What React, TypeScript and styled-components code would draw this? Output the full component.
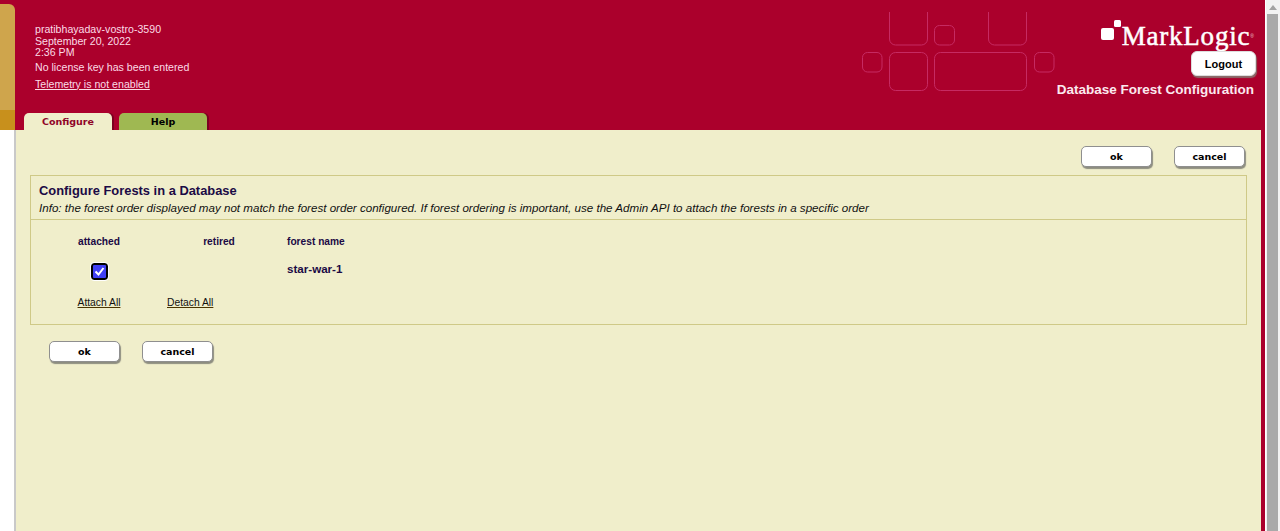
import React from 'react';
import styled, { createGlobalStyle } from 'styled-components';

const crimson = '#ab002c';
const cream = '#f0eecb';
const ink = '#1b0a45';

const GlobalStyle = createGlobalStyle`
  html, body {
    margin: 0;
    padding: 0;
    height: 100%;
    overflow: hidden;
    background: #fff;
    font-family: "Liberation Sans", Arial, sans-serif;
  }
`;

const Shell = styled.div`
  display: flex;
  height: 531px;
  overflow: hidden;
`;

const Rail = styled.div`
  width: 16px;
  flex: none;
  display: flex;
  flex-direction: column;
  background: #fff;
`;

const RailCap = styled.div`
  height: 130px;
  flex: none;
  background: ${crimson};
  padding-top: 4px;
  box-sizing: border-box;
`;

const RailTan = styled.div`
  height: 106px;
  width: 15px;
  background: #cfa54c;
  border-top-right-radius: 6px;
`;

const RailGold = styled.div`
  height: 20px;
  width: 15px;
  background: #c8901c;
`;

const RailEdge = styled.div`
  flex: 1;
  border-right: 2px solid #c9c9c9;
`;

const Main = styled.div`
  flex: 1;
  min-width: 0;
  display: flex;
  flex-direction: column;
  background: ${crimson};
  padding-right: 4px;
`;

const Header = styled.header`
  height: 113px;
  flex: none;
  display: flex;
`;

const HostInfo = styled.div`
  flex: 1;
  padding: 24px 0 0 19px;
  color: #fbdbe6;
  font-size: 10.6px;
  line-height: 11.5px;
`;

const LicenseNote = styled.div`
  margin-top: 2px;
  line-height: 13px;
`;

const TelemetryLink = styled.a`
  display: block;
  margin-top: 4px;
  line-height: 13px;
  color: #fbdbe6;
  text-decoration: underline;
`;

const Deco = styled.svg`
  flex: none;
  width: 193px;
  height: 92px;
`;

const Brand = styled.div`
  flex: none;
  width: 201px;
  margin-right: 5px;
  display: flex;
  flex-direction: column;
  align-items: flex-end;
`;

const Logo = styled.div`
  display: flex;
  align-items: flex-start;
  margin: 19px 2px 0 0;
  height: 32px;
`;

const LogoMark = styled.svg`
  width: 21px;
  height: 21px;
  flex: none;
  margin-top: 1px;
`;

const LogoWord = styled.span`
  font-family: "Liberation Serif", "Times New Roman", serif;
  font-size: 27px;
  line-height: 34px;
  letter-spacing: 0.8px;
  color: #fff;
  -webkit-text-stroke: 0.5px #fff;
`;

const LogoReg = styled.span`
  font-size: 5px;
  line-height: 34px;
  color: #f2c5d2;
`;

const LogoutButton = styled.button`
  width: 65px;
  height: 25px;
  padding: 0;
  border: 1px solid #ddd;
  border-radius: 6px;
  background: #fff;
  box-shadow: 1px 2px 1px #8a6a6a;
  color: #000;
  font: bold 11px "Liberation Sans", Arial, sans-serif;
`;

const PageTitle = styled.div`
  margin: 6px 2px 0 0;
  color: #fbe9ef;
  font-size: 13.5px;
  font-weight: bold;
  line-height: 16px;
  white-space: nowrap;
`;

const TabRow = styled.nav`
  height: 17px;
  flex: none;
  display: flex;
  gap: 7px;
  padding-left: 8px;
`;

const Tab = styled.div<{ $active?: boolean }>`
  width: 88px;
  text-align: center;
  border-radius: 5px 5px 0 0;
  box-shadow: 2px 0 0 #7c0020;
  background: ${p => (p.$active ? cream : '#9fb852')};
  color: ${p => (p.$active ? '#8f0429' : '#000')};
  font: bold 9.5px/18px "DejaVu Sans", Verdana, sans-serif;
`;

const Content = styled.main`
  flex: 1;
  background: ${cream};
  padding: 16px 14px 0 14px;
  color: ${ink};
`;

const ButtonRow = styled.div<{ $end?: boolean }>`
  display: flex;
  gap: 22px;
  justify-content: ${p => (p.$end ? 'flex-end' : 'flex-start')};
  padding: ${p => (p.$end ? '0 2px 0 0' : '16px 0 0 19px')};
`;

const FormButton = styled.button`
  width: 71px;
  height: 21px;
  padding: 0;
  border: 1px solid #8f8f8f;
  border-radius: 5px;
  background: #fff;
  box-shadow: 1px 2px 1px #8d8d80;
  color: #000;
  font: bold 9.5px "DejaVu Sans", Verdana, sans-serif;
`;

const Panel = styled.section`
  margin-top: 8px;
  height: 150px;
  box-sizing: border-box;
  border: 1px solid #cfc987;
`;

const PanelHead = styled.div`
  height: 44px;
  box-sizing: border-box;
  padding: 7px 8px 0;
  border-bottom: 1px solid #cfc987;
`;

const PanelTitle = styled.h2`
  margin: 0;
  font-size: 12.9px;
  line-height: 16px;
  font-weight: bold;
`;

const PanelInfo = styled.div`
  margin-top: 2px;
  color: #111;
  font-size: 11.6px;
  font-style: italic;
  line-height: 14px;
`;

const ForestGrid = styled.div`
  display: grid;
  grid-template-columns: 120px 120px 1fr;
  padding: 15px 8px 0;
`;

const HeadCell = styled.div<{ $left?: boolean }>`
  font-size: 10.2px;
  font-weight: bold;
  line-height: 13px;
  text-align: ${p => (p.$left ? 'left' : 'center')};
  padding-left: ${p => (p.$left ? '8px' : '0')};
`;

const CheckCell = styled.div`
  display: flex;
  justify-content: center;
  padding-top: 15px;
  height: 46px;
  box-sizing: border-box;
`;

const ForestName = styled.div`
  padding: 14px 0 0 8px;
  font-size: 11.6px;
  font-weight: bold;
  line-height: 14px;
`;

const CheckFrame = styled.span`
  width: 13px;
  height: 13px;
  border: 2px solid #000;
  border-radius: 3px;
  outline: 1px solid #fff;
  background: #4040f5;
  display: flex;
`;

const ActionCell = styled.div<{ $left?: boolean }>`
  text-align: ${p => (p.$left ? 'left' : 'center')};
  padding-left: ${p => (p.$left ? '8px' : '0')};
  line-height: 13px;
`;

const ActionLink = styled.a`
  color: #111;
  font-size: 10.3px;
  text-decoration: underline;
  text-decoration-color: #4a3300;
`;

const Scrollbar = styled.div`
  width: 15px;
  flex: none;
  display: flex;
  flex-direction: column;
  background: #f2f2f2;
  border-left: 1px solid #fff;
  box-sizing: border-box;
  padding: 5px 2px 0 1px;
`;

const ScrollArrow = styled.div`
  align-self: center;
  width: 0;
  height: 0;
  border-left: 4px solid transparent;
  border-right: 4px solid transparent;
  border-bottom: 5px solid #a3a3a3;
`;

const ScrollThumb = styled.div`
  flex: 1;
  margin-top: 4px;
  background: #a9a9a9;
`;

const App = () => (
  <Shell>
    <GlobalStyle />
    <Rail>
      <RailCap>
        <RailTan />
        <RailGold />
      </RailCap>
      <RailEdge />
    </Rail>
    <Main>
      <Header>
        <HostInfo>
          <div>pratibhayadav-vostro-3590</div>
          <div>September 20, 2022</div>
          <div>2:36 PM</div>
          <LicenseNote>No license key has been entered</LicenseNote>
          <TelemetryLink>Telemetry is not enabled</TelemetryLink>
        </HostInfo>
        <Deco viewBox="0 0 193 92" fill="none" stroke="#c62a62" strokeWidth="1">
          <path d="M27.5 12v27a6 6 0 0 0 6 6h26a6 6 0 0 0 6-6V12" />
          <path d="M126.5 12v27a6 6 0 0 0 6 6h26a6 6 0 0 0 6-6V12" />
          <rect x="72.5" y="25.5" width="20" height="19.5" rx="5" />
          <rect x="0.5" y="52.5" width="19.5" height="19.5" rx="5" />
          <rect x="27.5" y="52.5" width="38" height="38" rx="6" />
          <rect x="72.5" y="52.5" width="92" height="38" rx="6" />
          <rect x="172.5" y="52.5" width="19.5" height="19.5" rx="5" />
        </Deco>
        <Brand>
          <Logo>
            <LogoMark viewBox="0 0 21 21" fill="#fff">
              <rect x="0" y="8" width="13" height="12" rx="2" />
              <rect x="13" y="0" width="7" height="7" rx="1.5" />
            </LogoMark>
            <LogoWord>MarkLogic</LogoWord>
            <LogoReg>®</LogoReg>
          </Logo>
          <LogoutButton>Logout</LogoutButton>
          <PageTitle>Database Forest Configuration</PageTitle>
        </Brand>
      </Header>
      <TabRow>
        <Tab $active>Configure</Tab>
        <Tab>Help</Tab>
      </TabRow>
      <Content>
        <ButtonRow $end>
          <FormButton>ok</FormButton>
          <FormButton>cancel</FormButton>
        </ButtonRow>
        <Panel>
          <PanelHead>
            <PanelTitle>Configure Forests in a Database</PanelTitle>
            <PanelInfo>
              Info: the forest order displayed may not match the forest order configured. If forest
              ordering is important, use the Admin API to attach the forests in a specific order
            </PanelInfo>
          </PanelHead>
          <ForestGrid>
            <HeadCell>attached</HeadCell>
            <HeadCell>retired</HeadCell>
            <HeadCell $left>forest name</HeadCell>
            <CheckCell>
              <CheckFrame>
                <svg width="13" height="13" viewBox="0 0 13 13" fill="none">
                  <path d="M2.5 6.5l3 3L10.5 3" stroke="#fff" strokeWidth="2" />
                </svg>
              </CheckFrame>
            </CheckCell>
            <div />
            <ForestName>star-war-1</ForestName>
            <ActionCell>
              <ActionLink>Attach All</ActionLink>
            </ActionCell>
            <ActionCell $left>
              <ActionLink>Detach All</ActionLink>
            </ActionCell>
          </ForestGrid>
        </Panel>
        <ButtonRow>
          <FormButton>ok</FormButton>
          <FormButton>cancel</FormButton>
        </ButtonRow>
      </Content>
    </Main>
    <Scrollbar>
      <ScrollArrow />
      <ScrollThumb />
    </Scrollbar>
  </Shell>
);

export default App;
